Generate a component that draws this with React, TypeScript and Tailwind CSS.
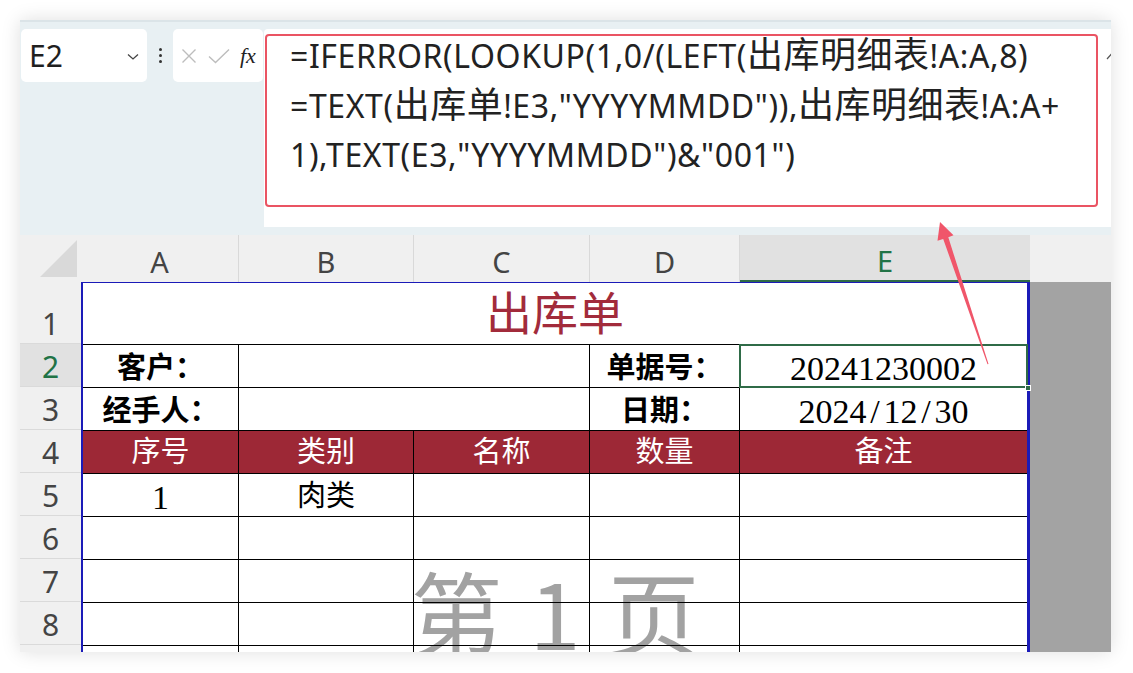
import React from 'react';

const cjkSans = { fontFamily: '"Noto Sans", "Noto Sans CJK SC", sans-serif' };
const cellFont = { fontFamily: '"Liberation Serif", "Noto Sans CJK SC", serif' };

const headerCols = [
  { label: 'A', w: 'w-[158px]' },
  { label: 'B', w: 'w-[175px]' },
  { label: 'C', w: 'w-[176px]' },
  { label: 'D', w: 'w-[150px]' },
];

const bodyRows = [5, 6, 7, 8, 9];

// row header heights: row 1 is tall, the rest are 43px
const rowNums = [1, 2, 3, 4, 5, 6, 7, 8, 9];

// CJK glyphs in the formula bar render larger than the latin ones
function Zh({ children }: { children: React.ReactNode }) {
  return <span className="text-[36px] tracking-[0.5px]">{children}</span>;
}

function FormulaBar() {
  return (
    <div className="flex h-[215px] shrink-0 bg-[#e8f0f3] border-t-2 border-[#dbe4e8] pt-[7px]">
      {/* Name box */}
      <div className="ml-[1px] flex h-[53px] w-[126px] items-center justify-between rounded-[5px] bg-white pl-[8px] pr-[8px]">
        <span className="text-[30px] leading-none text-[#1f1f1f]" style={cjkSans}>
          E2
        </span>
        <svg width="12" height="8" viewBox="0 0 12 8" className="mt-[2px]">
          <path d="M1 1.5 L6 6 L11 1.5" fill="none" stroke="#444" strokeWidth="1.3" />
        </svg>
      </div>

      {/* Splitter dots */}
      <div className="flex h-[53px] w-[26px] flex-col items-center justify-center gap-[3px]">
        <span className="h-[3px] w-[3px] rounded-full bg-[#333]" />
        <span className="h-[3px] w-[3px] rounded-full bg-[#333]" />
        <span className="h-[3px] w-[3px] rounded-full bg-[#333]" />
      </div>

      {/* Cancel / enter / fx */}
      <div className="flex h-[53px] w-[90px] items-center rounded-[5px] bg-white pl-[8px]">
        <svg width="16" height="16" viewBox="0 0 16 16">
          <path d="M1.5 1.5 L14.5 14.5 M14.5 1.5 L1.5 14.5" stroke="#bdbdbd" strokeWidth="1.4" />
        </svg>
        <svg width="22" height="16" viewBox="0 0 22 16" className="ml-[11px]">
          <path d="M1 8.5 L7.5 14.5 L21 1.5" fill="none" stroke="#bdbdbd" strokeWidth="1.4" />
        </svg>
        <span
          className="ml-[10px] text-[22px] italic leading-none text-[#222]"
          style={{ fontFamily: '"Liberation Serif", serif' }}
        >
          fx
        </span>
      </div>

      {/* Formula input */}
      <div className="relative ml-[1px] h-[198px] flex-1 rounded-tl-[4px] bg-white">
        <div
          className="whitespace-nowrap pl-[26px] pt-[1px] text-[32px] leading-[50px] tracking-[0.6px] text-[#222]"
          style={cjkSans}
        >
          <div className="h-[50px]">
            =IFERROR(LOOKUP(1,0/(LEFT(<Zh>出库明细表</Zh>!A:A,8)
          </div>
          <div className="h-[50px]">
            =TEXT(<Zh>出库单</Zh>!E3,"YYYYMMDD")),<Zh>出库明细表</Zh>!A:A+
          </div>
          <div className="h-[50px]">1),TEXT(E3,"YYYYMMDD")&amp;"001")</div>
        </div>
        {/* highlight box */}
        <div className="absolute left-[1px] top-[5px] h-[173px] w-[833px] rounded-[4px] border-2 border-[#ea5463]" />
        <svg width="10" height="7" viewBox="0 0 10 7" className="absolute right-[-5px] top-[24px]">
          <path d="M1 6 L5 1.5 L9 6" fill="none" stroke="#555" strokeWidth="1.2" />
        </svg>
      </div>
    </div>
  );
}

function ColumnHeaders() {
  return (
    <div className="flex h-[47px] shrink-0 bg-[#f0f0f0] text-[29px] text-[#444]" style={cjkSans}>
      <div className="w-[61px] shrink-0">
        <svg width="61" height="47" viewBox="0 0 61 47">
          <polygon points="57,5 57,42 20,42" fill="#d9d9d9" />
        </svg>
      </div>
      {headerCols.map((c) => (
        <div
          key={c.label}
          className={`${c.w} flex shrink-0 items-center justify-center border-r border-[#d9d9d9] pt-[6px] leading-none`}
        >
          {c.label}
        </div>
      ))}
      <div className="flex w-[290px] shrink-0 items-center justify-center border-b-2 border-[#2f6b47] bg-[#e1e1e1] pt-[6px] leading-none text-[#217346]">
        E
      </div>
      <div className="flex-1" />
    </div>
  );
}

function RowHeaders() {
  return (
    <div className="w-[61px] shrink-0 bg-[#f0f0f0] text-[30px] leading-[30px] text-[#444]" style={cjkSans}>
      {rowNums.map((n) => (
        <div
          key={n}
          className={
            n === 1
              ? 'flex h-[62px] items-end justify-center border-b border-[#dadada] pb-[4px]'
              : n === 2
              ? 'flex h-[43px] items-center justify-center border-b border-[#dadada] bg-[#e1e1e1] pt-[3px] text-[#217346]'
              : 'flex h-[43px] items-center justify-center border-b border-[#dadada] pt-[3px]'
          }
        >
          {n < 9 ? n : ''}
        </div>
      ))}
    </div>
  );
}

function PrintArea() {
  const cell = 'flex items-center justify-center border-b border-r border-black';
  const lastCell = 'flex items-center justify-center border-b border-black';
  const head = 'flex items-center justify-center border-b border-r border-black bg-[#9d2836] text-white pt-[2px]';
  const headLast = 'flex items-center justify-center border-b border-black bg-[#9d2836] text-white pt-[2px]';

  return (
    <div className="relative w-[949px] shrink-0 border-l-2 border-r-[3px] border-t border-[#1b1bb8] bg-white">
      {/* page watermark */}
      <div
        className="absolute left-0 right-0 top-[281px] flex justify-center text-[92px] leading-none text-[#a2a2a2]"
        style={{ fontFamily: '"Noto Sans CJK SC", sans-serif' }}
      >
        <span>第</span>
        <span className="ml-[27px] mr-[27px]">1</span>
        <span>页</span>
      </div>

      <div
        className="relative grid grid-cols-[156px_175px_176px_150px_287px] grid-rows-[62px] auto-rows-[43px] text-[29px] text-black"
        style={cellFont}
      >
        {/* row 1: title */}
        <div className="col-span-5 flex items-center justify-center border-b border-black pt-[2px] text-[46px] text-[#a22b3b]">
          出库单
        </div>

        {/* row 2 */}
        <div className={`${cell} pt-[6px] font-bold`}>客户：</div>
        <div className={`${cell} col-span-2`} />
        <div className={`${cell} pt-[6px] font-bold`}>单据号：</div>
        <div className={`${lastCell} relative pt-[4px] text-[34px]`}>
          20241230002
          <div className="absolute inset-[-1px] border-2 border-[#2f6b47]" />
          <div className="absolute bottom-[-4px] right-[-4px] h-[6px] w-[6px] border border-white bg-[#2f6b47]" />
        </div>

        {/* row 3 */}
        <div className={`${cell} pt-[6px] font-bold`}>经手人：</div>
        <div className={`${cell} col-span-2`} />
        <div className={`${cell} pt-[6px] font-bold`}>日期：</div>
        <div className={`${lastCell} pt-[4px] text-[34px]`}>
          2024<span className="inline-block w-[17px] text-center">/</span>12
          <span className="inline-block w-[17px] text-center">/</span>30
        </div>

        {/* row 4: table header */}
        <div className={head}>序号</div>
        <div className={head}>类别</div>
        <div className={head}>名称</div>
        <div className={head}>数量</div>
        <div className={headLast}>备注</div>

        {/* rows 5-9 */}
        {bodyRows.map((r) => (
          <React.Fragment key={r}>
            <div className={`${cell} pt-[4px] text-[34px]`}>{r === 5 ? '1' : ''}</div>
            <div className={`${cell} pt-[4px]`}>{r === 5 ? '肉类' : ''}</div>
            <div className={cell} />
            <div className={cell} />
            <div className={lastCell} />
          </React.Fragment>
        ))}
      </div>
    </div>
  );
}

export default function App() {
  return (
    <div className="relative h-[673px] w-[1133px] overflow-hidden bg-white">
      <div className="absolute left-[20px] top-[20px] flex h-[632px] w-[1091px] flex-col overflow-hidden bg-white shadow-[0_0_18px_rgba(0,0,0,0.13)]">
        <FormulaBar />
        <ColumnHeaders />
        <div className="flex min-h-0 flex-1">
          <RowHeaders />
          <PrintArea />
          <div className="flex-1 bg-[#a3a3a3]" />
        </div>
      </div>

      {/* annotation arrow */}
      <svg width="1133" height="673" className="pointer-events-none absolute left-0 top-0">
        <polygon
          points="940,222 953.5,235.3 948.3,237.3 988.5,364 987.5,364.3 943.2,238.9 937.5,240.7"
          fill="#f0566a"
        />
      </svg>
    </div>
  );
}
